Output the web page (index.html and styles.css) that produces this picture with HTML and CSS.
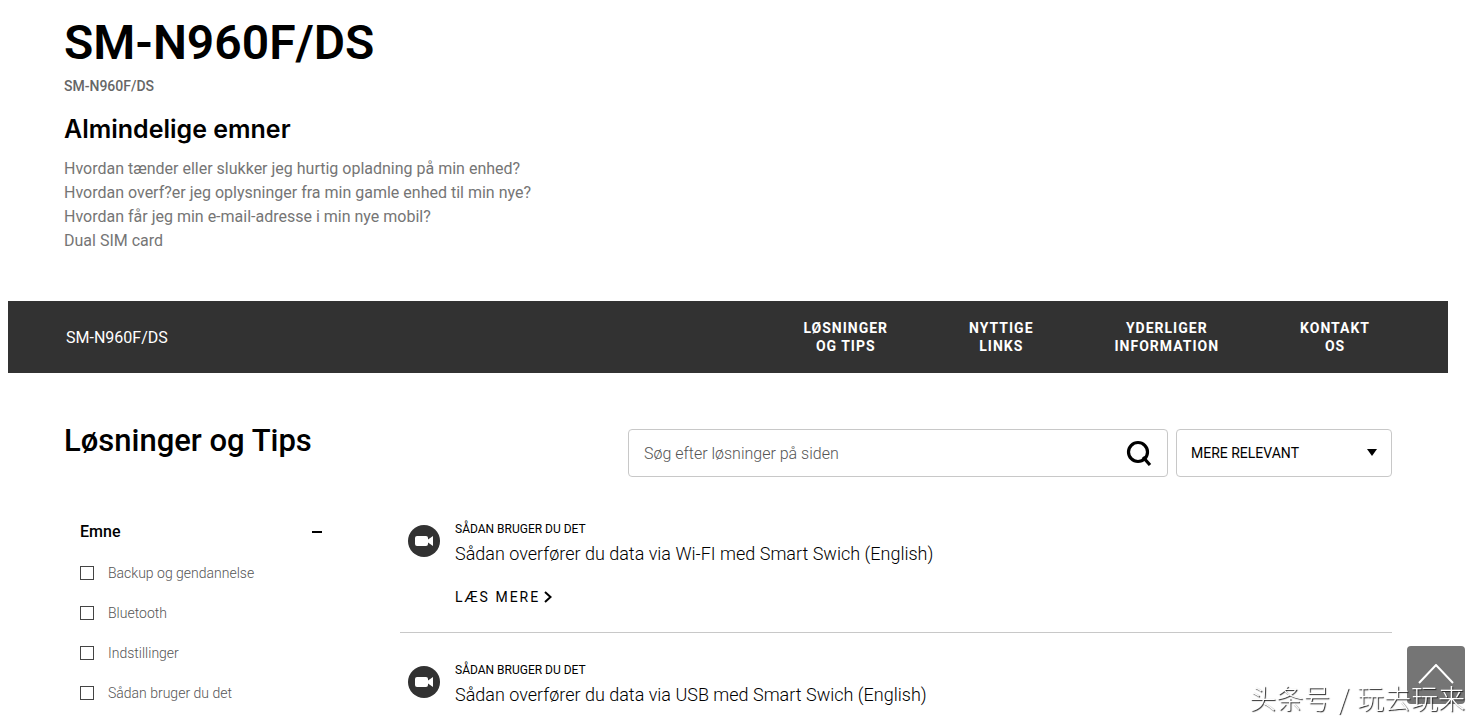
FILE: index.html
```html
<!DOCTYPE html>
<html lang="da">
<head>
  <meta charset="UTF-8">
  <meta name="viewport" content="width=device-width, initial-scale=1.0">
  <title>SM-N960F/DS</title>
  <link rel="stylesheet" href="styles.css">
</head>
<body>
  <header class="product">
    <h1>SM-N960F/DS</h1>
    <p class="model">SM-N960F/DS</p>
    <h2>Almindelige emner</h2>
    <ul class="topics">
      <li><a href="#">Hvordan tænder eller slukker jeg hurtig opladning på min enhed?</a></li>
      <li><a href="#">Hvordan overf?er jeg oplysninger fra min gamle enhed til min nye?</a></li>
      <li><a href="#">Hvordan får jeg min e-mail-adresse i min nye mobil?</a></li>
      <li><a href="#">Dual SIM card</a></li>
    </ul>
  </header>

  <!-- Menu -->
  <nav class="bar">
    <span class="bar-name">SM-N960F/DS</span>
    <div class="bar-links">
      <a href="#solutions">LØSNINGER<br>OG TIPS</a>
      <a href="#">NYTTIGE<br>LINKS</a>
      <a href="#">YDERLIGER<br>INFORMATION</a>
      <a href="#">KONTAKT<br>OS</a>
    </div>
  </nav>

  <main class="solutions" id="solutions">
    <div class="solutions-head">
      <h2>Løsninger og Tips</h2>
      <form class="search">
        <div class="search-box">
          <input type="text" placeholder="Søg efter løsninger på siden" aria-label="Søg efter løsninger på siden">
          <button type="button" aria-label="Søg">
            <svg width="26" height="26" viewBox="0 0 26 26" fill="none" stroke="#000" stroke-width="3.2">
              <circle cx="12" cy="12" r="9.500"/>
              <path d="M17 17L24 25"/>
            </svg>
          </button>
        </div>
        <div class="sort">
          <select aria-label="Sortering">
            <option>MERE RELEVANT</option>
          </select>
        </div>
      </form>
    </div>

    <div class="columns">
      <!-- Filter -->
      <aside class="filter">
        <button type="button" class="filter-toggle">Emne<span class="minus"></span></button>
        <label><input type="checkbox">Backup og gendannelse</label>
        <label><input type="checkbox">Bluetooth</label>
        <label><input type="checkbox">Indstillinger</label>
        <label><input type="checkbox">Sådan bruger du det</label>
      </aside>

      <!-- Resultater -->
      <div class="results">
        <article class="result">
          <svg class="video" width="32" height="32" viewBox="0 0 32 32">
            <circle cx="16" cy="16" r="16" fill="#323232"/>
            <path d="M9 11h9a2 2 0 0 1 2 2v1.500l5-3.500v10l-5-3.500v1.500a2 2 0 0 1-2 2h-9a2 2 0 0 1-2-2v-6a2 2 0 0 1 2-2z" fill="#fff"/>
          </svg>
          <div>
            <p class="category">SÅDAN BRUGER DU DET</p>
            <h3>Sådan overfører du data via Wi-FI med Smart Swich (English)</h3>
            <a class="more" href="#">LÆS MERE
              <svg width="8" height="12" viewBox="0 0 8 12" fill="none" stroke="#000" stroke-width="2"><path d="M1 1l5.500 5L1 11"/></svg>
            </a>
          </div>
        </article>
        <article class="result">
          <svg class="video" width="32" height="32" viewBox="0 0 32 32">
            <circle cx="16" cy="16" r="16" fill="#323232"/>
            <path d="M9 11h9a2 2 0 0 1 2 2v1.500l5-3.500v10l-5-3.500v1.500a2 2 0 0 1-2 2h-9a2 2 0 0 1-2-2v-6a2 2 0 0 1 2-2z" fill="#fff"/>
          </svg>
          <div>
            <p class="category">SÅDAN BRUGER DU DET</p>
            <h3>Sådan overfører du data via USB med Smart Swich (English)</h3>
          </div>
        </article>
      </div>
    </div>
  </main>

  <button type="button" class="to-top" aria-label="Til toppen">
    <svg width="36" height="20" viewBox="0 0 36 20" fill="none" stroke="#fff" stroke-width="2"><path d="M1 19L18 1l17 18"/></svg>
  </button>
  <div class="watermark" lang="zh"><span>头条号</span><span>/</span><span>玩去玩来</span></div>
</body>
</html>
```
FILE: styles.css
```css
* {
  box-sizing: border-box;
}

body {
  margin: 0 35px 0 8px;
  font-family: Roboto, "Liberation Sans", sans-serif;
  color: #000;
  background-color: #fff;
}

h1, h2, h3, p, ul {
  margin: 0;
  padding: 0;
}

a {
  color: inherit;
  text-decoration: none;
}

button {
  padding: 0;
  border: none;
  background: none;
  font-family: inherit;
  cursor: pointer;
}

.product {
  padding: 15px 56px 48px;
}

.product h1 {
  font-size: 48px;
  font-weight: 600;
  line-height: 56px;
}

.model {
  margin-top: 5px;
  font-size: 14px;
  font-weight: 500;
  line-height: 20px;
  color: #666;
}

.product h2 {
  margin-top: 17px;
  font-family: Inter, sans-serif;
  font-size: 25px;
  font-weight: 600;
  line-height: 32px;
}

.topics {
  margin-top: 12px;
  list-style: none;
  font-size: 16px;
  line-height: 24px;
  color: #757575;
}

/* Menu */
.bar {
  display: flex;
  align-items: center;
  justify-content: space-between;
  height: 72px;
  padding: 0 78px 0 58px;
  background-color: #323232;
  color: #fff;
}

.bar-name {
  font-size: 16px;
}

.bar-links {
  display: flex;
  gap: 81px;
  font-size: 14px;
  font-weight: 700;
  line-height: 18px;
  letter-spacing: 1px;
  text-align: center;
}

/* Løsninger */
.solutions {
  padding: 48px 56px 0;
}

.solutions-head {
  display: flex;
  justify-content: space-between;
}

.solutions-head h2 {
  font-size: 31px;
  font-weight: 500;
  line-height: 40px;
}

.search {
  display: flex;
  gap: 8px;
  width: 764px;
  padding-top: 8px;
}

.search-box {
  display: flex;
  flex: 1;
  align-items: center;
  height: 48px;
  padding: 0 15px;
  border: 1px solid #c8c8c8;
  border-radius: 4px;
}

.search-box input {
  flex: 1;
  padding: 1px 0 0;
  border: none;
  outline: none;
  font-family: inherit;
  font-size: 16px;
  font-weight: 300;
}

.search-box input::placeholder {
  color: #555;
}

.search-box button {
  height: 26px;
}

.sort {
  position: relative;
  width: 216px;
}

.sort select {
  width: 100%;
  height: 48px;
  padding: 0 14px;
  border: 1px solid #c8c8c8;
  border-radius: 4px;
  background-color: #fff;
  appearance: none;
  font-family: inherit;
  font-size: 14px;
  color: #000;
}

.sort::after {
  content: "";
  position: absolute;
  top: 20px;
  right: 15px;
  border: 5px solid transparent;
  border-top: 7px solid #000;
  border-bottom: none;
  pointer-events: none;
}

.columns {
  display: flex;
  gap: 78px;
  padding-top: 44px;
}

.filter {
  display: flex;
  flex-direction: column;
  width: 258px;
  padding-left: 16px;
}

.filter-toggle {
  display: flex;
  align-items: center;
  justify-content: space-between;
  height: 21px;
  margin-bottom: 11px;
  font-size: 16px;
  font-weight: 500;
  color: #000;
}

.minus {
  width: 10px;
  height: 2px;
  background-color: #000;
}

.filter label {
  display: flex;
  align-items: center;
  gap: 14px;
  height: 40px;
  font-size: 14px;
  font-weight: 300;
  color: #555;
}

.filter input {
  width: 14px;
  height: 14px;
  margin: 0;
  border: 1px solid #444;
  appearance: none;
}

.filter input:checked {
  background-color: #444;
}

/* Resultater */
.results {
  flex: 1;
}

.result {
  display: flex;
  gap: 15px;
  padding: 0 8px 25px;
}

.result + .result {
  padding-top: 29px;
  padding-bottom: 0;
  border-top: 1px solid #c8c8c8;
}

.video {
  flex: none;
  margin-top: 4px;
}

.category {
  font-size: 12px;
  line-height: 16px;
}

.result h3 {
  margin-top: 5px;
  font-size: 18px;
  font-weight: 300;
  line-height: 24px;
}

.more {
  display: flex;
  align-items: center;
  gap: 4px;
  margin-top: 21px;
  font-size: 14px;
  line-height: 20px;
  letter-spacing: 2px;
}

.to-top {
  position: fixed;
  right: 18px;
  bottom: 19px;
  width: 58px;
  height: 58px;
  border-radius: 4px;
  background-color: #757575;
}

.watermark {
  position: fixed;
  right: 18px;
  bottom: 5px;
  display: flex;
  gap: 8px;
  font-family: "Noto Sans CJK SC", sans-serif;
  font-size: 27px;
  font-weight: 300;
  line-height: 40px;
  color: #fff;
  text-shadow: 1px 1px 1px #222;
}
```
